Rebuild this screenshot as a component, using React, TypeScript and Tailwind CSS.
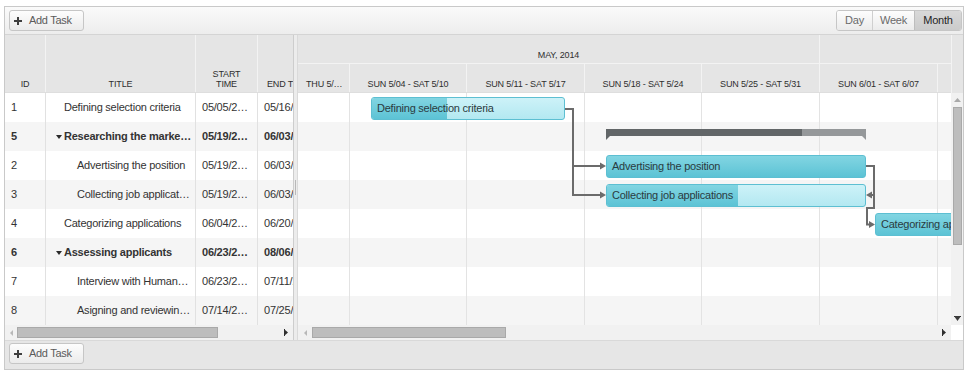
import React from 'react';

type Row = { id: string; title: string; start: string; end: string; level: 0 | 1; summary?: boolean };

const rows: Row[] = [
  { id: '1', title: 'Defining selection criteria', start: '05/05/2…', end: '05/16/2…', level: 0 },
  { id: '5', title: 'Researching the marke…', start: '05/19/2…', end: '06/03/2…', level: 0, summary: true },
  { id: '2', title: 'Advertising the position', start: '05/19/2…', end: '06/03/2…', level: 1 },
  { id: '3', title: 'Collecting job applicat…', start: '05/19/2…', end: '06/03/2…', level: 1 },
  { id: '4', title: 'Categorizing applications', start: '06/04/2…', end: '06/20/2…', level: 0 },
  { id: '6', title: 'Assessing applicants', start: '06/23/2…', end: '08/06/2…', level: 0, summary: true },
  { id: '7', title: 'Interview with Human…', start: '06/23/2…', end: '07/11/2…', level: 1 },
  { id: '8', title: 'Asigning and reviewin…', start: '07/14/2…', end: '07/25/2…', level: 1 },
];

function Plus() {
  return (
    <svg width="8" height="8" viewBox="0 0 8 8" className="shrink-0">
      <rect x="3" y="0" width="2" height="8" fill="#3f3f3f" />
      <rect x="0" y="3" width="8" height="2" fill="#3f3f3f" />
    </svg>
  );
}

function AddTask() {
  return (
    <div className="w-[75px] h-[21px] rounded-[3px] border border-[#c6c6c6] bg-[linear-gradient(to_bottom,#fdfdfd,#ebebeb)] flex items-center pl-[4px] gap-[7px] text-[11px] tracking-[-0.3px] text-[#5b5b5b]">
      <Plus />
      <span>Add Task</span>
    </div>
  );
}

function Views() {
  return (
    <div className="flex h-[21px] rounded-[3px] border border-[#c6c6c6] overflow-hidden text-[11px] tracking-[-0.25px]">
      <div className="w-[35px] flex items-center justify-center bg-[linear-gradient(to_bottom,#fdfdfd,#ebebeb)] text-[#6a6a6a]">Day</div>
      <div className="w-[42px] flex items-center justify-center border-l border-[#cfcfcf] bg-[linear-gradient(to_bottom,#fdfdfd,#ebebeb)] text-[#6a6a6a]">Week</div>
      <div className="w-[47px] flex items-center justify-center border-l border-[#bdbdbd] bg-[linear-gradient(to_bottom,#d9d9d9,#cbcbcb)] text-[#1f1f1f]">Month</div>
    </div>
  );
}

function LeftArrow({ color }: { color: string }) {
  return (
    <svg width="3" height="6" viewBox="0 0 3 6">
      <polygon points="3,0 0,3 3,6" fill={color} />
    </svg>
  );
}

function RightArrow({ color }: { color: string }) {
  return (
    <svg width="4" height="7" viewBox="0 0 4 7">
      <rect x="0" y="0" width="1" height="7" fill={color} />
      <polygon points="0,0 4,3.5 0,7" fill={color} />
    </svg>
  );
}

function LeftPane() {
  return (
    <div className="w-[288px] shrink-0 flex flex-col overflow-hidden">
      <div className="h-[58px] shrink-0 flex bg-[#e5e5e5] border-b border-[#dedede] text-[9px] leading-[10px] tracking-[-0.15px] text-[#2f2f2f] whitespace-nowrap">
        <div className="w-[41px] shrink-0 flex items-end justify-center pb-[3px] border-r border-[#f3f3f3]">ID</div>
        <div className="w-[150px] shrink-0 flex items-end justify-center pb-[3px] border-r border-[#f3f3f3]">TITLE</div>
        <div className="w-[62px] shrink-0 flex items-end justify-center pb-[3px] border-r border-[#f3f3f3] text-center">
          START
          <br />
          TIME
        </div>
        <div className="w-[35px] shrink-0 flex items-end justify-start pl-[9px] pb-[3px] overflow-hidden">END T</div>
      </div>
      <div className="h-[232px] shrink-0 flex flex-col text-[11px] tracking-[-0.23px] text-[#333]">
        {rows.map((r, i) => (
          <div key={r.id} className={i % 2 ? 'h-[29px] shrink-0 flex bg-[#f5f5f5]' : 'h-[29px] shrink-0 flex bg-white'}>
            <div className={r.summary ? 'w-[41px] shrink-0 flex items-center pl-[6px] border-r border-[#e1e1e1] font-bold' : 'w-[41px] shrink-0 flex items-center pl-[6px] border-r border-[#e1e1e1]'}>
              {r.id}
            </div>
            <div
              className={
                r.summary
                  ? 'w-[150px] shrink-0 flex items-center pl-[10px] border-r border-[#e1e1e1] font-bold whitespace-nowrap overflow-hidden'
                  : r.level === 1
                  ? 'w-[150px] shrink-0 flex items-center pl-[31px] border-r border-[#e1e1e1] whitespace-nowrap overflow-hidden'
                  : 'w-[150px] shrink-0 flex items-center pl-[18px] border-r border-[#e1e1e1] whitespace-nowrap overflow-hidden'
              }
            >
              {r.summary && (
                <svg width="6" height="4" viewBox="0 0 6 4" className="mr-[2px] shrink-0">
                  <polygon points="0,0 6,0 3,4" fill="#2a2a2a" />
                </svg>
              )}
              <span>{r.title}</span>
            </div>
            <div className={r.summary ? 'w-[62px] shrink-0 flex items-center pl-[6px] border-r border-[#e1e1e1] font-bold whitespace-nowrap overflow-hidden' : 'w-[62px] shrink-0 flex items-center pl-[6px] border-r border-[#e1e1e1] whitespace-nowrap overflow-hidden'}>
              {r.start}
            </div>
            <div className={r.summary ? 'w-[35px] shrink-0 flex items-center pl-[6px] font-bold whitespace-nowrap overflow-hidden' : 'w-[35px] shrink-0 flex items-center pl-[6px] whitespace-nowrap overflow-hidden'}>
              {r.end}
            </div>
          </div>
        ))}
      </div>
      <div className="h-[15px] shrink-0 flex items-center bg-[#f1f1f1]">
        <div className="w-[12px] shrink-0 flex justify-center">
          <LeftArrow color="#b8b8b8" />
        </div>
        <div className="w-[201px] h-[11px] shrink-0 bg-[#bdbdbd] border border-[#a9a9a9]" />
        <div className="flex-1" />
        <div className="w-[14px] shrink-0 flex justify-center">
          <RightArrow color="#2f2f2f" />
        </div>
      </div>
    </div>
  );
}

function Splitter() {
  return (
    <div className="w-[5px] shrink-0 bg-[#ececec] border-l border-[#cdcdcd] border-r border-r-[#dadada] flex items-center justify-center">
      <div className="w-[1px] h-[15px] bg-[#b8b8b8]" />
    </div>
  );
}

const weekCols = [
  { w: 'w-[52px] shrink-0 flex items-end justify-start pl-[8px] pb-[3px] border-r border-[#f3f3f3] overflow-hidden whitespace-nowrap', label: 'THU 5/…' },
  { w: 'w-[117px] shrink-0 flex items-end justify-center pb-[3px] border-r border-[#f3f3f3] whitespace-nowrap', label: 'SUN 5/04 - SAT 5/10' },
  { w: 'w-[118px] shrink-0 flex items-end justify-center pb-[3px] border-r border-[#f3f3f3] whitespace-nowrap', label: 'SUN 5/11 - SAT 5/17' },
  { w: 'w-[117px] shrink-0 flex items-end justify-center pb-[3px] border-r border-[#f3f3f3] whitespace-nowrap', label: 'SUN 5/18 - SAT 5/24' },
  { w: 'w-[118px] shrink-0 flex items-end justify-center pb-[3px] border-r border-[#f3f3f3] whitespace-nowrap', label: 'SUN 5/25 - SAT 5/31' },
  { w: 'w-[118px] shrink-0 flex items-end justify-center pb-[3px] border-r border-[#f3f3f3] whitespace-nowrap', label: 'SUN 6/01 - SAT 6/07' },
  { w: 'flex-1', label: '' },
];

const bodyCols = [
  'w-[52px] shrink-0 border-r border-[#e3e3e3]',
  'w-[117px] shrink-0 border-r border-[#e3e3e3]',
  'w-[118px] shrink-0 border-r border-[#e3e3e3]',
  'w-[117px] shrink-0 border-r border-[#e3e3e3]',
  'w-[118px] shrink-0 border-r border-[#e3e3e3]',
  'w-[118px] shrink-0 border-r border-[#e3e3e3]',
  'flex-1',
];

const barText = 'relative pl-[5px] leading-[21px] text-[11px] tracking-[-0.23px] text-[#2b3b40] whitespace-nowrap';

function Timeline() {
  return (
    <div className="w-[653px] h-[232px] shrink-0 relative overflow-hidden">
      {rows.map((r, i) => (
        <div key={r.id} className={i % 2 ? 'h-[29px] flex bg-[#f5f5f5]' : 'h-[29px] flex bg-white'}>
          {bodyCols.map((c, j) => (
            <div key={j} className={c} />
          ))}
        </div>
      ))}

      {/* Defining selection criteria */}
      <div className="absolute left-[73px] top-[4px] w-[194px] h-[23px] rounded-[3px] border border-[#5dbfd2] bg-[linear-gradient(to_bottom,#cdf2f8,#b3e8f1)] overflow-hidden">
        <div className="absolute left-0 top-0 bottom-0 w-[75px] bg-[linear-gradient(to_bottom,#82d5e2,#5cc3d5)]" />
        <div className={barText}>Defining selection criteria</div>
      </div>

      {/* Summary: Researching the market */}
      <div className="absolute left-[308px] top-[36px] w-[260px] h-[7px] bg-[#95989a]">
        <div className="absolute left-0 top-0 bottom-0 w-[196px] bg-[#626668]" />
        <div className="absolute left-0 top-[7px] w-0 h-0 border-t-[4px] border-t-[#626668] border-r-[4px] border-r-transparent" />
        <div className="absolute right-0 top-[7px] w-0 h-0 border-t-[4px] border-t-[#95989a] border-l-[4px] border-l-transparent" />
      </div>

      {/* Advertising the position */}
      <div className="absolute left-[308px] top-[62px] w-[260px] h-[23px] rounded-[3px] border border-[#5dbfd2] bg-[linear-gradient(to_bottom,#82d5e2,#5cc3d5)] overflow-hidden">
        <div className={barText}>Advertising the position</div>
      </div>

      {/* Collecting job applications */}
      <div className="absolute left-[308px] top-[91px] w-[260px] h-[23px] rounded-[3px] border border-[#5dbfd2] bg-[linear-gradient(to_bottom,#cdf2f8,#b3e8f1)] overflow-hidden">
        <div className="absolute left-0 top-0 bottom-0 w-[131px] bg-[linear-gradient(to_bottom,#82d5e2,#5cc3d5)]" />
        <div className={barText}>Collecting job applications</div>
      </div>

      {/* Categorizing applications */}
      <div className="absolute left-[577px] top-[120px] w-[200px] h-[23px] rounded-[3px] border border-[#5dbfd2] bg-[linear-gradient(to_bottom,#82d5e2,#5cc3d5)] overflow-hidden">
        <div className={barText}>Categorizing applications</div>
      </div>

      <svg className="absolute left-0 top-0 pointer-events-none" width="653" height="232" viewBox="0 0 653 232">
        <g stroke="#6b6b6b" strokeWidth="2" fill="none">
          <path d="M267 16 H275 V102 H302" />
          <path d="M275 73 H302" />
          <path d="M568 73 H576 V115 H569 V131.5 H572" />
          <path d="M576 102 H573" />
        </g>
        <g fill="#6b6b6b">
          <polygon points="302,69.5 308,73 302,76.5" />
          <polygon points="302,98.5 308,102 302,105.5" />
          <polygon points="574,98.5 568,102 574,105.5" />
          <polygon points="571,128 577,131.5 571,135" />
        </g>
      </svg>
    </div>
  );
}

function VScroll() {
  return (
    <div className="w-[12px] shrink-0 bg-[#f1f1f1] flex flex-col">
      <div className="h-[14px] shrink-0 flex items-center justify-center">
        <svg width="7" height="4" viewBox="0 0 7 4">
          <polygon points="0,4 3.5,0 7,4" fill="#a9a9a9" />
        </svg>
      </div>
      <div className="h-[138px] w-[9px] ml-[2px] shrink-0 bg-[#bdbdbd] border border-[#a9a9a9]" />
      <div className="flex-1" />
      <div className="h-[14px] shrink-0 flex items-center justify-center">
        <svg width="7" height="5" viewBox="0 0 7 5">
          <rect x="0" y="0" width="7" height="1" fill="#3a3a3a" />
          <polygon points="0,0 7,0 3.5,5" fill="#3a3a3a" />
        </svg>
      </div>
    </div>
  );
}

function RightPane() {
  return (
    <div className="w-[665px] shrink-0 flex flex-col">
      <div className="h-[58px] shrink-0 flex bg-[#e5e5e5] text-[9px] leading-[10px] tracking-[-0.15px] text-[#2f2f2f]">
        <div className="w-[653px] shrink-0 flex flex-col">
          <div className="h-[29px] shrink-0 flex border-b border-[#f3f3f3]">
            <div className="w-[522px] shrink-0 flex items-end justify-center pb-[3px] border-r border-[#f3f3f3]">MAY, 2014</div>
            <div className="flex-1" />
          </div>
          <div className="h-[29px] shrink-0 flex border-b border-[#dedede]">
            {weekCols.map((c, j) => (
              <div key={j} className={c.w}>
                {c.label}
              </div>
            ))}
          </div>
        </div>
        <div className="flex-1 border-l border-[#f3f3f3]" />
      </div>
      <div className="h-[232px] shrink-0 flex">
        <Timeline />
        <VScroll />
      </div>
      <div className="h-[15px] shrink-0 flex">
        <div className="w-[653px] shrink-0 flex items-center bg-[#f1f1f1]">
          <div className="w-[14px] shrink-0 flex justify-center">
            <LeftArrow color="#b8b8b8" />
          </div>
          <div className="w-[194px] h-[11px] shrink-0 bg-[#bdbdbd] border border-[#a9a9a9]" />
          <div className="flex-1" />
          <div className="w-[14px] shrink-0 flex justify-center">
            <RightArrow color="#2f2f2f" />
          </div>
        </div>
        <div className="flex-1 bg-white" />
      </div>
    </div>
  );
}

export default function App() {
  return (
    <div className="w-[976px] h-[379px] bg-white pt-[6px] pl-[4px] font-['Liberation_Sans',Arial,sans-serif] text-[#333]">
      <div className="w-[960px] h-[364px] border border-[#c9c9c9] flex flex-col overflow-hidden bg-white">
        <div className="h-[28px] shrink-0 flex items-center justify-between pl-[4px] pr-[1px] border-b border-[#d4d4d4] bg-[linear-gradient(to_bottom,#fafafa,#ededed)]">
          <AddTask />
          <Views />
        </div>
        <div className="h-[305px] shrink-0 flex">
          <LeftPane />
          <Splitter />
          <RightPane />
        </div>
        <div className="flex-1 bg-[#e6e6e6] border-t border-[#d9d9d9] pl-[4px] pt-[2px]">
          <AddTask />
        </div>
      </div>
    </div>
  );
}
